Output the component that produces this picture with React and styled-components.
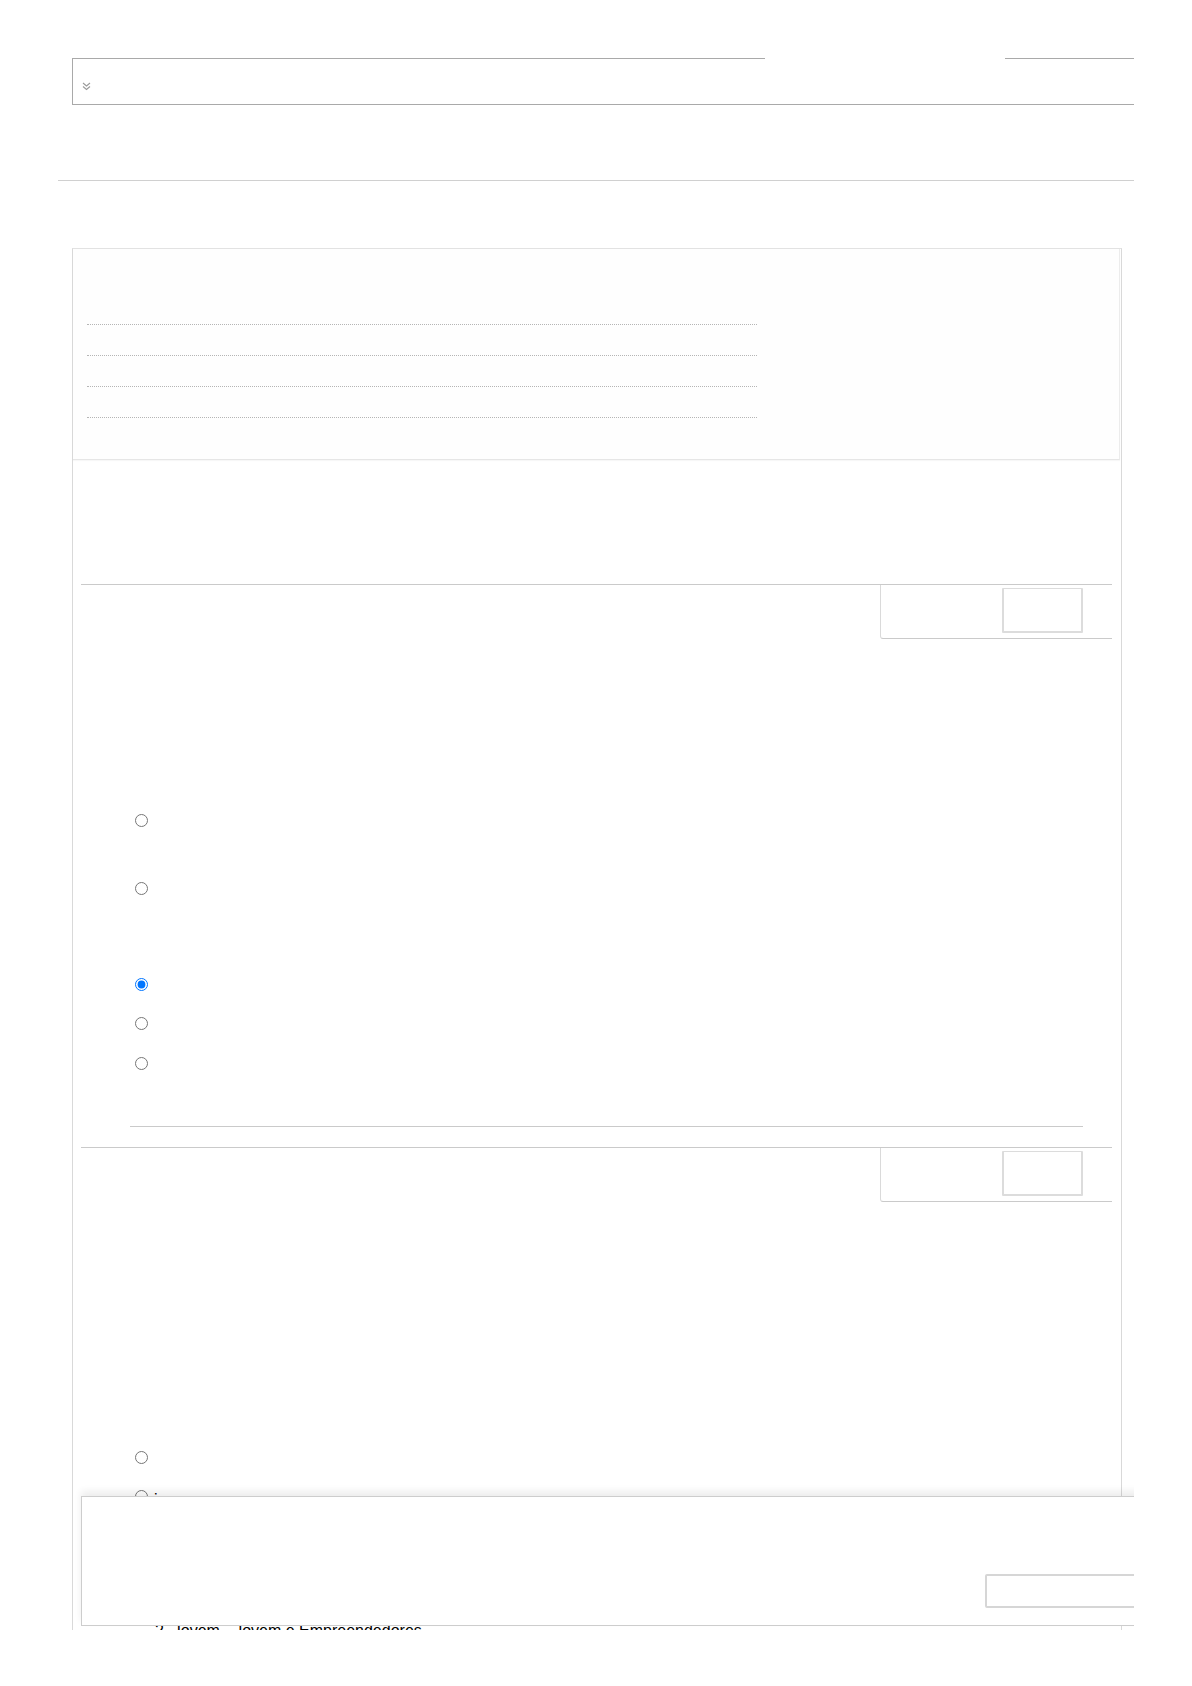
import React from "react";
import styled, { createGlobalStyle } from "styled-components";

const Global = createGlobalStyle`
  html, body { margin: 0; padding: 0; background: #fff; }
  body { font-family: "Liberation Sans", Arial, sans-serif; font-size: 16px; color: #000; }
  * { box-sizing: border-box; }
`;

const Page = styled.div`
  position: relative;
  margin-left: 58px;
  width: 1076px;
  height: 1630px;
  overflow: hidden;
  padding-top: 58px;
`;

const TopBox = styled.div`
  position: relative;
  margin-left: 14px;
  width: 1100px;
  height: 47px;
  border: 1px solid #a9a9a9;
  border-right: none;
  display: flex;
  align-items: flex-start;
  padding: 23px 0 0 9px;
`;

const BorderGap = styled.span`
  position: absolute;
  top: -1px;
  left: 692px;
  width: 240px;
  height: 1px;
  background: #fff;
`;

const Chevron = styled.svg`
  width: 9px;
  height: 9px;
  display: block;
`;

const Rule = styled.div`
  margin-top: 75px;
  height: 1px;
  background: #d0d0d0;
`;

const Panel = styled.div`
  margin: 67px 0 0 14px;
  width: 1050px;
  height: 1400px;
  border: 1px solid #d9d9d9;
  border-top-color: #e2e2e2;
  border-bottom: none;
`;

const PanelHeader = styled.div`
  height: 211px;
  margin-right: 1px;
  background: #fefefe;
  border-bottom: 1px solid #e6e6e6;
  border-right: 1px solid #ececec;
  box-shadow: 0 1px 1px rgba(0, 0, 0, 0.03);
  padding: 45px 0 0 14px;
`;

const DotLine = styled.div`
  width: 670px;
  height: 31px;
  border-bottom: 1px dotted #b5b5b5;
`;

const Section = styled.div`
  margin: ${(p) => p.$top}px 9px 0 8px;
  border-top: 1px solid #cacaca;
`;

const SectionBar = styled.div`
  display: flex;
  justify-content: flex-end;
`;

const SubBox = styled.div`
  width: 232px;
  height: 54px;
  border-left: 1px solid #dadada;
  border-bottom: 1px solid #cacaca;
  border-bottom-left-radius: 3px;
  display: flex;
  justify-content: flex-end;
  padding: 3px 29px 0 0;
`;

const Button = styled.button`
  width: 81px;
  height: 45px;
  padding: 0;
  background: #fff;
  border: 2px solid #dcdcdc;
  border-top-width: 1px;
  border-radius: 1px;
`;

const Options = styled.div`
  padding-left: 54px;
`;

const Option = styled.label`
  display: flex;
  align-items: flex-start;
  gap: 6px;
  height: 13px;
  margin-top: ${(p) => p.$top}px;
  font-size: 16px;
  line-height: 13px;
`;

const Radio = styled.input.attrs({ type: "radio" })`
  margin: 0;
  width: 13px;
  height: 13px;
  flex: none;
`;

const LabelText = styled.span`
  display: block;
  line-height: 18px;
  margin-top: 1px;
`;

const InnerRule = styled.div`
  margin: 56px 29px 0 49px;
  height: 1px;
  background: #cacaca;
`;

const QuestionTitle = styled.div`
  margin: 119px 0 0 74px;
  font-size: 16px;
  line-height: 18px;
  white-space: nowrap;
`;

const Footer = styled.div`
  position: absolute;
  left: 23px;
  top: 1496px;
  width: 1090px;
  height: 130px;
  background: #fff;
  border: 1px solid #cdcdcd;
  box-shadow: 0 -5px 7px rgba(0, 0, 0, 0.07);
  padding: 77px 0 0 903px;
`;

const FooterButton = styled.button`
  width: 180px;
  height: 34px;
  padding: 0;
  background: #fff;
  border: 2px solid #d6d6d6;
  border-radius: 2px;
`;

function SectionHead() {
  return (
    <SectionBar>
      <SubBox>
        <Button type="button" aria-label="Marcar" />
      </SubBox>
    </SectionBar>
  );
}

export default function App() {
  return (
    <>
      <Global />
      <Page>
        <TopBox>
          <BorderGap />
          <Chevron viewBox="0 0 9 9" aria-hidden="true">
            <path d="M1 1 L4.5 4 L8 1 M1 4.5 L4.5 7.5 L8 4.5" fill="none" stroke="#9a9a9a" strokeWidth="1.1" />
          </Chevron>
        </TopBox>
        <Rule />
        <Panel>
          <PanelHeader>
            <DotLine />
            <DotLine />
            <DotLine />
            <DotLine />
          </PanelHeader>

          <Section $top={124}>
            <SectionHead />
            <Options>
              <Option $top={175}><Radio name="q1" /></Option>
              <Option $top={55}><Radio name="q1" /></Option>
              <Option $top={83}><Radio name="q1" defaultChecked /></Option>
              <Option $top={26}><Radio name="q1" /></Option>
              <Option $top={27}><Radio name="q1" /></Option>
            </Options>
            <InnerRule />
          </Section>

          <Section $top={20}>
            <SectionHead />
            <Options>
              <Option $top={249}><Radio name="q2" /></Option>
              <Option $top={26}>
                <Radio name="q2" />
                <LabelText>i</LabelText>
              </Option>
            </Options>
            <QuestionTitle>2. Jovem - Jovem e Empreendedores</QuestionTitle>
          </Section>
        </Panel>
        <Footer>
          <FooterButton type="button" aria-label="Enviar" />
        </Footer>
      </Page>
    </>
  );
}
